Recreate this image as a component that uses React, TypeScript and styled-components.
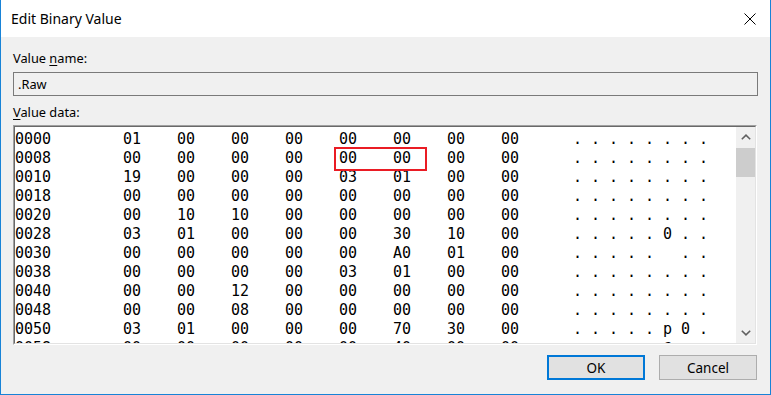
import React from "react";
import styled, { createGlobalStyle } from "styled-components";

const Global = createGlobalStyle`
  html, body { margin: 0; padding: 0; background: #ffffff; }
  * { box-sizing: border-box; }
`;

const UI = `"Segoe UI", "Noto Sans", "Liberation Sans", sans-serif`;
const MONO = `"DejaVu Sans Mono", "Liberation Mono", monospace`;

const Window = styled.div`
  width: 771px;
  height: 395px;
  border: 1px solid #1883d7;
  border-top: none;
  display: flex;
  flex-direction: column;
  font-family: ${UI};
  color: #000;
`;

const TitleBar = styled.div`
  height: 37px;
  background: #ffffff;
  display: flex;
  align-items: center;
  justify-content: space-between;
  padding: 0 14px 0 10px;
`;

const Title = styled.div`
  font-size: 14px;
  line-height: 20px;
  margin-top: 1px;
`;

const CloseBtn = styled.div`
  width: 12px;
  height: 12px;
  display: flex;
  margin-top: 1px;
`;

const Body = styled.div`
  flex: 1;
  background: #f0f0f0;
  padding: 0 12px;
  display: flex;
  flex-direction: column;
`;

const Label = styled.div<{ $mt: number }>`
  margin-top: ${(p) => p.$mt}px;
  height: 20px;
  font-size: 12.8px;
  line-height: 20px;
  u { text-decoration: underline; text-underline-offset: 2px; }
`;

const NameBox = styled.div`
  margin-top: 4px;
  height: 24px;
  border: 1px solid #7a7a7a;
  background: #f0f0f0;
  padding-left: 4px;
  font-size: 12.8px;
  line-height: 22px;
`;

const DataBox = styled.div`
  margin-top: 3px;
  height: 220px;
  width: 744px;
  border-style: solid;
  border-width: 1px;
  border-color: #a0a0a0 #ffffff #ffffff #a0a0a0;
  display: flex;
`;

const DataInner = styled.div`
  flex: 1;
  display: flex;
  border-style: solid;
  border-width: 1px;
  border-color: #696969 #e3e3e3 #e3e3e3 #696969;
  background: #ffffff;
  overflow: hidden;
  position: relative;
`;

const Rows = styled.div`
  flex: 1;
  padding-top: 3px;
  overflow: hidden;
  font-family: ${MONO};
  font-size: 15px;
`;

const Row = styled.div`
  display: grid;
  grid-template-columns: 108px repeat(8, 54px) 18px repeat(8, 18px);
  height: 19px;
  line-height: 19px;
  white-space: pre;
`;

const Cell = styled.span`
  display: block;
`;

const Highlight = styled.div`
  position: absolute;
  left: 319px;
  top: 20px;
  width: 93px;
  height: 24px;
  border: 2px solid #ea1c24;
`;

const ScrollBar = styled.div`
  width: 19px;
  background: #f0f0f0;
  display: flex;
  flex-direction: column;
  align-items: stretch;
`;

const ArrowBtn = styled.div`
  height: 20px;
  display: flex;
  align-items: center;
  justify-content: center;
`;

const Thumb = styled.div`
  height: 29px;
  background: #cdcdcd;
  margin-top: 1px;
`;

const Track = styled.div`
  flex: 1;
`;

const Buttons = styled.div`
  margin-top: 10px;
  display: flex;
  justify-content: flex-end;
  gap: 14px;
  padding-right: 1px;
`;

const Button = styled.div<{ $default?: boolean }>`
  width: 98px;
  height: 25px;
  background: #e1e1e1;
  border: ${(p) => (p.$default ? "2px solid #0078d7" : "1px solid #adadad")};
  display: flex;
  align-items: center;
  justify-content: center;
  font-size: 13.5px;
`;

const rows: [string, string[], string][] = [
  ["0000", ["01", "00", "00", "00", "00", "00", "00", "00"], "........"],
  ["0008", ["00", "00", "00", "00", "00", "00", "00", "00"], "........"],
  ["0010", ["19", "00", "00", "00", "03", "01", "00", "00"], "........"],
  ["0018", ["00", "00", "00", "00", "00", "00", "00", "00"], "........"],
  ["0020", ["00", "10", "10", "00", "00", "00", "00", "00"], "........"],
  ["0028", ["03", "01", "00", "00", "00", "30", "10", "00"], ".....0.."],
  ["0030", ["00", "00", "00", "00", "00", "A0", "01", "00"], "..... .."],
  ["0038", ["00", "00", "00", "00", "03", "01", "00", "00"], "........"],
  ["0040", ["00", "00", "12", "00", "00", "00", "00", "00"], "........"],
  ["0048", ["00", "00", "08", "00", "00", "00", "00", "00"], "........"],
  ["0050", ["03", "01", "00", "00", "00", "70", "30", "00"], ".....p0."],
  ["0058", ["00", "00", "00", "00", "00", "40", "00", "00"], ".....@.."],
];

export default function App() {
  return (
    <>
      <Global />
      <Window>
        <TitleBar>
          <Title>Edit Binary Value</Title>
          <CloseBtn>
            <svg width="12" height="12" viewBox="0 0 12 12">
              <path d="M0.5 0.5 L11.5 11.5 M11.5 0.5 L0.5 11.5" stroke="#000" strokeWidth="1" />
            </svg>
          </CloseBtn>
        </TitleBar>
        <Body>
          <Label $mt={11}>
            Value <u>n</u>ame:
          </Label>
          <NameBox>.Raw</NameBox>
          <Label $mt={6}>
            <u>V</u>alue data:
          </Label>
          <DataBox>
            <DataInner>
              <Rows>
                {rows.map(([addr, bytes, ascii]) => (
                  <Row key={addr}>
                    <Cell>{addr}</Cell>
                    {bytes.map((b, i) => (
                      <Cell key={i}>{b}</Cell>
                    ))}
                    <Cell />
                    {ascii.split("").map((c, i) => (
                      <Cell key={"a" + i}>{c}</Cell>
                    ))}
                  </Row>
                ))}
              </Rows>
              <Highlight />
              <ScrollBar>
                <ArrowBtn>
                  <svg width="10" height="6" viewBox="0 0 10 6">
                    <path d="M0.8 5.3 L5 1.2 L9.2 5.3" stroke="#606060" strokeWidth="1.6" fill="none" />
                  </svg>
                </ArrowBtn>
                <Thumb />
                <Track />
                <ArrowBtn>
                  <svg width="10" height="6" viewBox="0 0 10 6">
                    <path d="M0.8 0.7 L5 4.8 L9.2 0.7" stroke="#606060" strokeWidth="1.6" fill="none" />
                  </svg>
                </ArrowBtn>
              </ScrollBar>
            </DataInner>
          </DataBox>
          <Buttons>
            <Button $default>OK</Button>
            <Button>Cancel</Button>
          </Buttons>
        </Body>
      </Window>
    </>
  );
}
